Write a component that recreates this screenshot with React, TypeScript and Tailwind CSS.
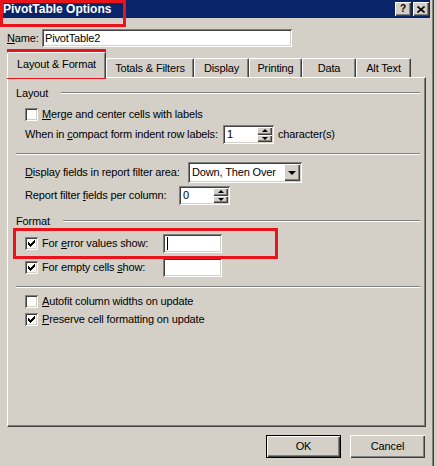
import type { ReactNode } from 'react'

const sunken =
  'bg-white shadow-[inset_1px_1px_0_#808080,inset_-1px_-1px_0_#ffffff,inset_2px_2px_0_#404040,inset_-2px_-2px_0_#d4d0c8]'
const raised =
  'bg-[#d4d0c8] shadow-[inset_1px_1px_0_#ffffff,inset_-1px_-1px_0_#404040,inset_-2px_-2px_0_#808080]'

function U({ children }: { children: ReactNode }) {
  return <span className="underline underline-offset-[1px]">{children}</span>
}

function Check({ checked }: { checked: boolean }) {
  return (
    <span className={`flex h-[13px] w-[13px] shrink-0 items-center justify-center ${sunken}`}>
      {checked ? (
        <svg width="7" height="7" viewBox="0 0 7 7">
          <path d="M0 2h1v1h1v1h1v-1h1v-1h1v-1h1v-1h1v3h-1v1h-1v1h-1v1h-1v1h-1v-1h-1v-1h-1z" fill="#000" />
        </svg>
      ) : null}
    </span>
  )
}

function Etched({ className = '' }: { className?: string }) {
  return <div className={`h-[2px] border-t border-b border-t-[#808080] border-b-white ${className}`} />
}

function Spinner({ value, w }: { value: string; w: string }) {
  return (
    <div className={`flex h-[19px] shrink-0 items-stretch p-[2px] ${w} ${sunken}`}>
      <span className="flex-1 pl-[2px] leading-[15px]">{value}</span>
      <div className="flex w-[15px] flex-col">
        <span className={`flex flex-1 items-center justify-center ${raised}`}>
          <span className="h-0 w-0 border-x-[3px] border-b-[3px] border-x-transparent border-b-black" />
        </span>
        <span className={`flex flex-1 items-center justify-center ${raised}`}>
          <span className="h-0 w-0 border-x-[3px] border-t-[3px] border-x-transparent border-t-black" />
        </span>
      </div>
    </div>
  )
}

function GroupLabel({ label, lineStart }: { label: string; lineStart: string }) {
  return (
    <div className="flex h-[16px] items-center pl-[8px]">
      <span className={`shrink-0 ${lineStart}`}>{label}</span>
      <Etched className="mr-[5px] flex-1" />
    </div>
  )
}

const tabs = [
  { label: 'Totals & Filters', w: 'w-[88px]' },
  { label: 'Display', w: 'w-[55px]' },
  { label: 'Printing', w: 'w-[53px]' },
  { label: 'Data', w: 'w-[54px]' },
  { label: 'Alt Text', w: 'w-[55px]' },
]

export default function App() {
  return (
    <div
      className="relative h-[466px] w-[437px] overflow-hidden whitespace-nowrap bg-[#d4d0c8] text-[11px] tracking-[-0.15px] text-black"
      style={{ fontFamily: '"Liberation Sans", Arial, sans-serif' }}
    >
      <div className="h-full w-[434px] border-r border-r-[#404040]">
        <div className="h-full border-r border-r-[#808080] pr-[2px]">
          {/* title bar */}
          <div className="flex h-[18px] items-center justify-between bg-[#0a246a] pl-[3px] pr-[1px]">
            <span className="text-[12px] font-bold tracking-normal text-white">PivotTable Options</span>
            <div className="flex gap-[2px]">
              <span className={`flex h-[14px] w-[16px] items-center justify-center text-[10px] font-bold leading-none ${raised}`}>
                ?
              </span>
              <span className={`flex h-[14px] w-[16px] items-center justify-center ${raised}`}>
                <svg width="8" height="7" viewBox="0 0 8 7">
                  <path d="M0.5 0.5l7 6M7.5 0.5l-7 6" stroke="#000" strokeWidth="1.6" />
                </svg>
              </span>
            </div>
          </div>

          {/* name */}
          <div className="mt-[11px] flex h-[18px] items-center pl-[7px]">
            <span className="w-[35px]">
              <U>N</U>ame:
            </span>
            <div className={`flex h-[18px] w-[250px] items-center pl-[3px] ${sunken}`}>PivotTable2</div>
          </div>

          {/* tabs */}
          <div className="mt-[5px] flex h-[25px] items-end pl-[7px]">
            <div className="relative z-10 -mb-px flex h-[26px] w-[99px] items-center justify-center rounded-t-[2px] border-l border-t border-r border-l-white border-t-white border-r-[#404040] bg-[#d4d0c8] pb-[2px] shadow-[inset_-1px_0_0_#808080]">
              Layout &amp; Format
            </div>
            {tabs.map((t) => (
              <div
                key={t.label}
                className={`flex h-[19px] ${t.w} items-center justify-center rounded-t-[2px] border-t border-l border-r border-t-white border-l-white border-r-[#404040] shadow-[inset_-1px_0_0_#808080]`}
              >
                {t.label}
              </div>
            ))}
          </div>

          {/* panel */}
          <div className="ml-[7px] h-[350px] w-[419px] border-l border-t border-r border-b border-l-white border-t-white border-r-[#404040] border-b-[#404040] shadow-[inset_-1px_-1px_0_#808080]">
            <div className="flex flex-col">
              <div className="mt-[7px]">
                <GroupLabel label="Layout" lineStart="w-[45px]" />
              </div>
              <div className="mt-[3px] flex h-[20px] items-center gap-[4px] pl-[17px]">
                <Check checked={false} />
                <span>
                  <U>M</U>erge and center cells with labels
                </span>
              </div>
              <div className="mt-px flex h-[19px] items-center pl-[17px]">
                <span className="w-[198px] shrink-0">
                  When in <U>c</U>ompact form indent row labels:
                </span>
                <Spinner value="1" w="w-[51px]" />
                <span className="ml-[4px]">character(s)</span>
              </div>
              <Etched className="ml-[8px] mr-[5px] mt-[9px]" />
              <div className="mt-[7px] flex h-[21px] items-center pl-[17px]">
                <span className="w-[163px] shrink-0">
                  <U>D</U>isplay fields in report filter area:
                </span>
                <div className={`flex h-[21px] w-[114px] items-stretch p-[2px] ${sunken}`}>
                  <span className="flex-1 pl-[2px] leading-[17px]">Down, Then Over</span>
                  <span className={`flex w-[16px] items-center justify-center ${raised}`}>
                    <span className="h-0 w-0 border-x-[4px] border-t-[4px] border-x-transparent border-t-black" />
                  </span>
                </div>
              </div>
              <div className="mt-[3px] flex h-[19px] items-center pl-[17px]">
                <span className="w-[154px] shrink-0">
                  Report filter <U>f</U>ields per column:
                </span>
                <Spinner value="0" w="w-[51px]" />
              </div>
              <div className="mt-[8px]">
                <GroupLabel label="Format" lineStart="w-[47px]" />
              </div>
              <div className="mt-[5px] flex h-[19px] items-center pl-[17px]">
                <Check checked />
                <span className="ml-[4px] w-[121px] shrink-0">
                  For <U>e</U>rror values show:
                </span>
                <div className={`flex h-[19px] w-[59px] items-center pl-[4px] ${sunken}`}>
                  <span className="h-[13px] w-px bg-black" />
                </div>
              </div>
              <div className="mt-[5px] flex h-[19px] items-center pl-[17px]">
                <Check checked />
                <span className="ml-[4px] w-[121px] shrink-0">
                  For empty cells <U>s</U>how:
                </span>
                <div className={`h-[19px] w-[59px] ${sunken}`} />
              </div>
              <Etched className="ml-[8px] mr-[5px] mt-[9px]" />
              <div className="mt-[4px] flex h-[18px] items-center gap-[4px] pl-[17px]">
                <Check checked={false} />
                <span>
                  <U>A</U>utofit column widths on update
                </span>
              </div>
              <div className="flex h-[18px] items-center gap-[4px] pl-[17px]">
                <Check checked />
                <span>
                  <U>P</U>reserve cell formatting on update
                </span>
              </div>
            </div>
          </div>

          {/* buttons */}
          <div className="mt-[8px] flex justify-end gap-[9px] pr-[5px]">
            <div className="h-[23px] w-[75px] border border-black">
              <div className={`flex h-full items-center justify-center ${raised}`}>OK</div>
            </div>
            <div className={`flex h-[23px] w-[75px] items-center justify-center ${raised}`}>Cancel</div>
          </div>
        </div>
      </div>

      {/* red annotation boxes */}
      <div className="pointer-events-none absolute left-0 top-0 h-[27px] w-[126px] border-[3px] border-[#e8141c]" />
      <div className="pointer-events-none absolute left-[7px] top-[49px] h-[30px] w-[99px] border-[3px] border-[#e8141c]" />
      <div className="pointer-events-none absolute left-[13px] top-[228px] h-[31px] w-[265px] border-[3px] border-[#e8141c]" />
    </div>
  )
}
